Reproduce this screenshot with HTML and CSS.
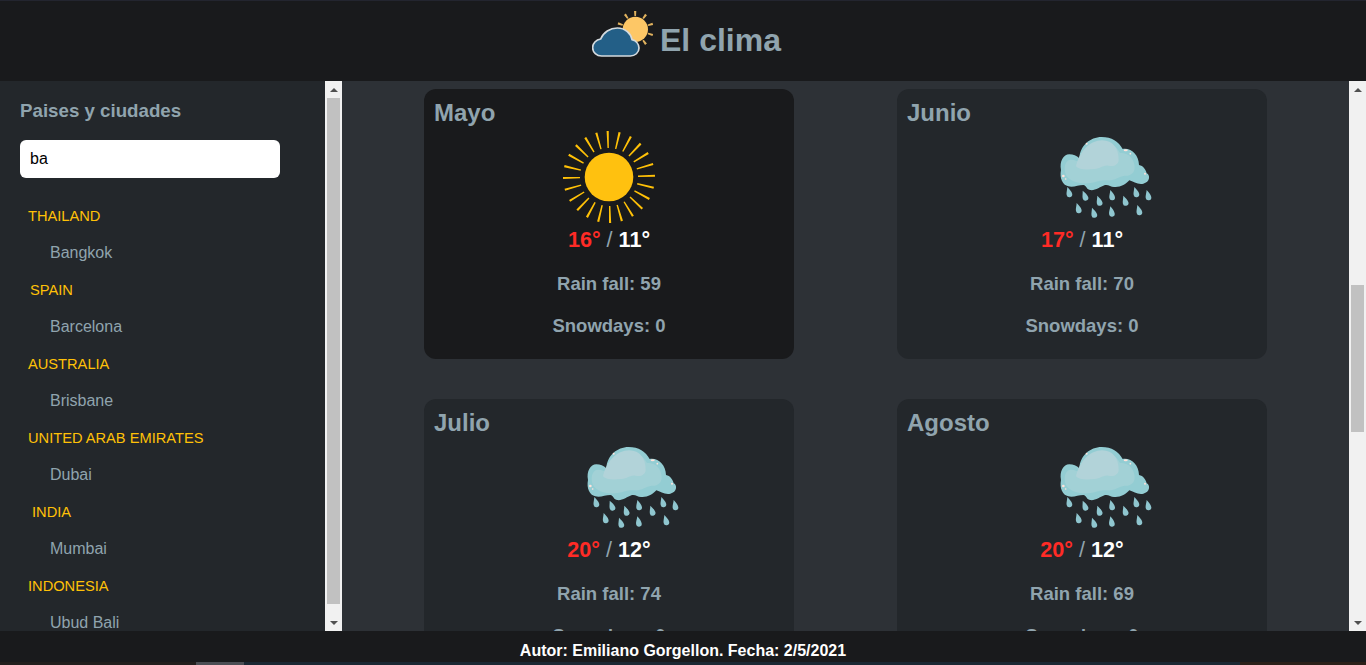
FILE: index.html
```html
<!DOCTYPE html>
<html lang="es">
<head>
<meta charset="UTF-8">
<meta name="viewport" content="width=device-width, initial-scale=1">
<title>El clima</title>
<link rel="stylesheet" href="styles.css">
</head>
<body>

<svg class="defs" width="0" height="0">
  <defs>
    <path id="drop" d="M0 0C5 8 10 16 10 23a8.5 8.5 0 0 1-17 0C-7 16-2 8 0 0Z" fill="#8fc6cf"/>
    <symbol id="sunny" viewBox="0 0 100 100">
      <circle cx="50" cy="50" r="37.5" fill="none" stroke="#ffc107" stroke-width="17" stroke-dasharray="1.8 8.017" transform="rotate(-93 50 50)"/>
      <circle cx="50" cy="50" r="24.3" fill="#ffc10f"/>
    </symbol>
    <symbol id="rainy" viewBox="45 6 300 300">
      <path fill="#93cdd3" d="M63 135C58 110 70 88 88 88c12 0 22 4 30 12 2-38 32-64 67-64 30 0 51 14 63 36 27-4 48 18 49 48 13 2 21 15 23 25 12 5 10 27-10 31-15 4-30-6-42-10-10 12-28 22-46 20-10-1-17-8-27-6-15 5-30 18-45 15-12-3-10-13-20-15-15 0-30 8-45 4-17-4-27-24-22-49Z"/>
      <path fill="#a2d1d6" d="M78 150c-8-20-4-44 14-46 16 0 26 10 36 4 8-30 30-58 58-58 26 0 44 14 54 34 24-2 44 16 44 44 0 16-14 26-30 24-18 2-30 16-52 14-18-2-32 4-50 8-26 4-62-2-74-24Z"/>
      <path fill="#b2d3d9" d="M108 124c10-44 42-78 78-78 34 0 50 26 50 58 0 14-14 22-30 18-14-4-24 8-42 10-20 2-46 4-56-8Z"/>
      <g fill="#ffe3dc">
        <circle cx="140" cy="56" r="3"/><ellipse cx="257" cy="76" rx="6" ry="3"/><circle cx="271" cy="86" r="2.5"/>
        <circle cx="70" cy="153" r="4"/><circle cx="77" cy="162" r="2.5"/><circle cx="315" cy="146" r="3"/>
      </g>
      <use href="#drop" transform="translate(82 186) rotate(-12)"/>
      <use href="#drop" transform="translate(128 197) rotate(-18)"/>
      <use href="#drop" transform="translate(172 212) rotate(-14)"/>
      <use href="#drop" transform="translate(211 195) rotate(-10)"/>
      <use href="#drop" transform="translate(250 212) rotate(-14)"/>
      <use href="#drop" transform="translate(283 186) rotate(-12)"/>
      <use href="#drop" transform="translate(320 195) rotate(-10)"/>
      <use href="#drop" transform="translate(110 234) rotate(-12)"/>
      <use href="#drop" transform="translate(156 248) rotate(-14)"/>
      <use href="#drop" transform="translate(211 244) rotate(-8)"/>
      <use href="#drop" transform="translate(292 240) rotate(-12)"/>
    </symbol>
  </defs>
</svg>

<header class="top">
  <svg class="logo" viewBox="66 24 192 150" aria-hidden="true">
    <circle cx="196" cy="85" r="47.5" fill="none" stroke="#e0b25e" stroke-width="15" stroke-dasharray="6 23.8" transform="rotate(-94 196 85)"/>
    <circle cx="196" cy="85" r="38" fill="#fdc766"/>
    <path fill="#235f87" stroke="#d4dade" stroke-width="5" d="M95 165c-15 0-27-11-27-25 0-13 10-24 24-26 8-20 28-33 50-33 24 0 41 17 44 35 12 3 21 13 21 25 0 14-12 24-26 24Z"/>
  </svg>
  <h1>El clima</h1>
</header>

<div class="layout">
  <aside class="side">
    <div class="side-body">
      <h3>Paises y ciudades</h3>
      <input class="search" type="text" value="ba">
      <ul class="places">
        <li class="country">THAILAND</li>
        <li class="city">Bangkok</li>
        <li class="country country-spain">SPAIN</li>
        <li class="city">Barcelona</li>
        <li class="country">AUSTRALIA</li>
        <li class="city">Brisbane</li>
        <li class="country">UNITED ARAB EMIRATES</li>
        <li class="city">Dubai</li>
        <li class="country country-india">INDIA</li>
        <li class="city">Mumbai</li>
        <li class="country">INDONESIA</li>
        <li class="city">Ubud Bali</li>
      </ul>
    </div>
    <div class="scrollbar">
      <span class="arrow arrow-up"></span>
      <div class="track"><div class="thumb thumb-side"></div></div>
      <span class="arrow arrow-down"></span>
    </div>
  </aside>

  <main class="content">
    <div class="months">
      <section class="card card-hover">
        <h2>Mayo</h2>
        <div class="pic"><svg class="icon"><use href="#sunny"/></svg></div>
        <p class="temp"><b class="max">16°</b> / <b class="min">11°</b></p>
        <p class="stat">Rain fall: 59</p>
        <p class="stat">Snowdays: 0</p>
      </section>
      <section class="card">
        <h2>Junio</h2>
        <div class="pic"><svg class="icon icon-rain"><use href="#rainy"/></svg></div>
        <p class="temp"><b class="max">17°</b> / <b class="min">11°</b></p>
        <p class="stat">Rain fall: 70</p>
        <p class="stat">Snowdays: 0</p>
      </section>
      <section class="card">
        <h2>Julio</h2>
        <div class="pic"><svg class="icon icon-rain"><use href="#rainy"/></svg></div>
        <p class="temp"><b class="max">20°</b> / <b class="min">12°</b></p>
        <p class="stat">Rain fall: 74</p>
        <p class="stat">Snowdays: 0</p>
      </section>
      <section class="card">
        <h2>Agosto</h2>
        <div class="pic"><svg class="icon icon-rain"><use href="#rainy"/></svg></div>
        <p class="temp"><b class="max">20°</b> / <b class="min">12°</b></p>
        <p class="stat">Rain fall: 69</p>
        <p class="stat">Snowdays: 0</p>
      </section>
    </div>
    <div class="scrollbar">
      <span class="arrow arrow-up"></span>
      <div class="track"><div class="thumb thumb-main"></div></div>
      <span class="arrow arrow-down"></span>
    </div>
  </main>
</div>

<footer class="bottom">Autor: Emiliano Gorgellon. Fecha: 2/5/2021</footer>

<div class="desk-strip">
  <span class="strip-a"></span>
  <span class="strip-b"></span>
  <span class="strip-c"></span>
  <span class="strip-d"></span>
</div>

</body>
</html>
```

FILE: styles.css
```css
:root {
  --text-muted: #90a4ae;
  --panel: #23272b;
  --bar: #191a1c;
  --accent: #ffc107;
}

* { box-sizing: border-box; }

html, body { height: 100%; }

body {
  margin: 0;
  display: flex;
  flex-direction: column;
  overflow: hidden;
  font-family: "Liberation Sans", Arial, sans-serif;
  color: var(--text-muted);
  background: #2d3136;
}

.defs { position: absolute; }

/* cabecera */
.top {
  flex: none;
  height: 81px;
  display: flex;
  align-items: center;
  justify-content: center;
  gap: 4px;
  padding-left: 7px;
  background: var(--bar);
  border-top: 1px solid #23252f;
}

.logo {
  width: 64px;
  height: 50px;
  margin-bottom: 14px;
}

.top h1 {
  margin: 0 0 2px;
  font-size: 32px;
  line-height: 37px;
}

.layout {
  flex: 1;
  min-height: 0;
  display: flex;
}

/* columna izquierda */
.side {
  flex: none;
  width: 342px;
  display: flex;
  background: var(--panel);
  overflow: hidden;
}

.side-body {
  flex: 1;
  min-width: 0;
  padding: 19px 0 0 20px;
  overflow: hidden;
}

.side h3 {
  margin: 0 0 19px;
  font-size: 18.72px;
  line-height: 21px;
}

.search {
  display: block;
  width: 260px;
  height: 38px;
  padding: 0 10px;
  border: 0;
  border-radius: 6px;
  font: 16px "Liberation Sans", Arial, sans-serif;
  color: #000;
  background: #fff;
}

.places {
  list-style: none;
  margin: 19px 0 0 -20px;
  padding: 0;
}

.places li {
  height: 37px;
  line-height: 37px;
}

.places .country {
  padding-left: 28px;
  font-size: 14.65px;
  line-height: 39px;
  color: var(--accent);
}

.places .country-spain { padding-left: 30px; }
.places .country-india { padding-left: 32px; }

.city {
  padding-left: 50px;
  font-size: 16px;
}

/* barras de scroll */
.scrollbar {
  flex: none;
  width: 17px;
  display: flex;
  flex-direction: column;
  background: #f1f1f1;
}

.arrow {
  flex: none;
  height: 17px;
  display: flex;
  align-items: center;
  justify-content: center;
}

.arrow::before {
  content: "";
  border-left: 4px solid transparent;
  border-right: 4px solid transparent;
}

.arrow-up::before { border-bottom: 4px solid #505050; }
.arrow-down::before { border-top: 4px solid #505050; }

.track {
  flex: 1;
  padding: 0 2px;
}

.thumb { background: #c1c1c1; }

.thumb-side { height: 506px; }

.thumb-main {
  height: 147px;
  margin-top: 187px;
}

/* meses */
.content {
  flex: 1;
  min-width: 0;
  display: flex;
  overflow: hidden;
}

.months {
  flex: 1;
  min-width: 0;
  display: grid;
  grid-template-columns: 370px 370px;
  justify-content: center;
  column-gap: 103px;
  row-gap: 40px;
  align-content: start;
  padding-top: 8px;
  overflow: hidden;
}

.card {
  height: 270px;
  padding: 10px 10px 0;
  border-radius: 12px;
  background: var(--panel);
  text-align: center;
}

.card-hover { background: #191a1c; }

.card h2 {
  margin: 0;
  font-size: 24px;
  line-height: 28px;
  text-align: left;
}

.pic {
  height: 100px;
  display: flex;
  justify-content: center;
}

.icon {
  flex: none;
  width: 100px;
  height: 100px;
}

.icon-rain { margin-left: 46px; }

.temp {
  margin: 0;
  font-size: 21.6px;
  line-height: 26px;
}

.max { color: #ff2b26; }
.min { color: #fff; }

.stat {
  margin: 19px 0 0;
  font-size: 18.5px;
  font-weight: bold;
  line-height: 23px;
}

/* pie */
.bottom {
  flex: none;
  height: 31px;
  line-height: 40px;
  overflow: hidden;
  background: var(--bar);
  color: #fff;
  font-size: 16px;
  font-weight: bold;
  text-align: center;
}

.desk-strip {
  flex: none;
  height: 3px;
  display: flex;
}

.strip-a { width: 196px; background: #221f1d; }
.strip-b { width: 48px; background: #4b4e54; }
.strip-c { flex: 1; background: #1b2833; }
.strip-d { width: 126px; background: #2b2019; }
```
